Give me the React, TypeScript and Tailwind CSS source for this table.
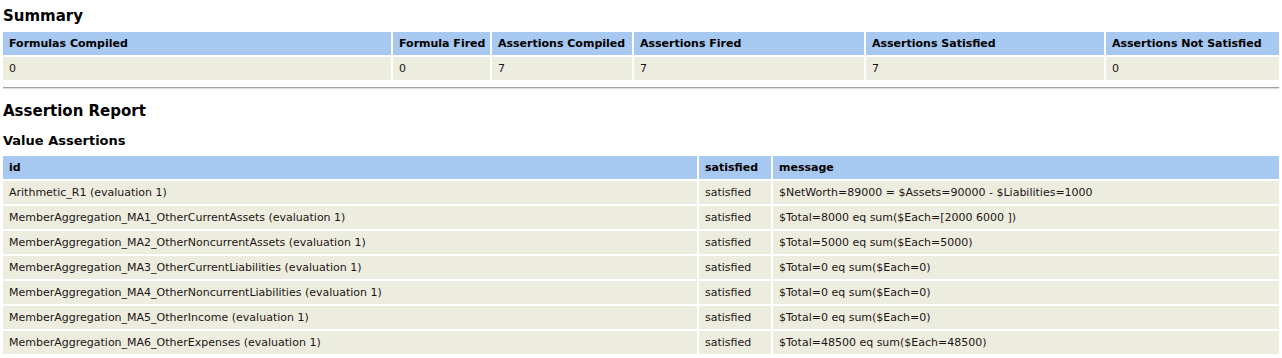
const summaryCols = [
  { label: "Formulas Compiled", value: "0", w: "w-[388px]" },
  { label: "Formula Fired", value: "0", w: "w-[97px]" },
  { label: "Assertions Compiled", value: "7", w: "w-[140px]" },
  { label: "Assertions Fired", value: "7", w: "w-[230px]" },
  { label: "Assertions Satisfied", value: "7", w: "w-[238px]" },
  { label: "Assertions Not Satisfied", value: "0", w: "w-[173px]" },
]

const assertions = [
  { id: "Arithmetic_R1 (evaluation 1)", msg: "$NetWorth=89000 = $Assets=90000 - $Liabilities=1000" },
  { id: "MemberAggregation_MA1_OtherCurrentAssets (evaluation 1)", msg: "$Total=8000 eq sum($Each=[2000 6000 ])" },
  { id: "MemberAggregation_MA2_OtherNoncurrentAssets (evaluation 1)", msg: "$Total=5000 eq sum($Each=5000)" },
  { id: "MemberAggregation_MA3_OtherCurrentLiabilities (evaluation 1)", msg: "$Total=0 eq sum($Each=0)" },
  { id: "MemberAggregation_MA4_OtherNoncurrentLiabilities (evaluation 1)", msg: "$Total=0 eq sum($Each=0)" },
  { id: "MemberAggregation_MA5_OtherIncome (evaluation 1)", msg: "$Total=0 eq sum($Each=0)" },
  { id: "MemberAggregation_MA6_OtherExpenses (evaluation 1)", msg: "$Total=48500 eq sum($Each=48500)" },
]

const th = "h-[23px] bg-[#a7c8f0] pl-[6px] pr-[4px] text-left align-middle font-bold text-black leading-[14px]"
const td = "h-[23px] bg-[#ededdf] pl-[6px] pr-[4px] text-left align-middle leading-[14px]"

export default function App() {
  return (
    <div className="min-h-[358px] bg-white px-px font-['DejaVu_Sans',Verdana,sans-serif] text-[11px] text-[#1c1414]">
      <h2 className="pl-[2px] pt-[7px] text-[15px] font-bold leading-[18px] text-black">Summary</h2>

      <table className="mt-[5px] w-full table-fixed border-separate border-spacing-[2px]">
        <thead>
          <tr>
            {summaryCols.map((c) => (
              <th key={c.label} className={`${th} ${c.w}`}>
                {c.label}
              </th>
            ))}
          </tr>
        </thead>
        <tbody>
          <tr>
            {summaryCols.map((c) => (
              <td key={c.label} className={td}>
                {c.value}
              </td>
            ))}
          </tr>
        </tbody>
      </table>

      <div className="mx-[2px] mt-[5px] h-[2px] border-t border-b border-t-[#a0a0a0] border-b-[#dcdcdc]" />

      <h2 className="mt-[13px] pl-[2px] text-[15px] font-bold leading-[18px] text-black">Assertion Report</h2>
      <h3 className="mt-[13px] pl-[2px] text-[13px] font-bold leading-[16px] text-black">Value Assertions</h3>

      <table className="mt-[5px] w-full table-fixed border-separate border-spacing-[2px]">
        <thead>
          <tr>
            <th className={`${th} w-[694px]`}>id</th>
            <th className={`${th} w-[72px]`}>satisfied</th>
            <th className={`${th} w-[506px]`}>message</th>
          </tr>
        </thead>
        <tbody>
          {assertions.map((a) => (
            <tr key={a.id}>
              <td className={td}>{a.id}</td>
              <td className={td}>satisfied</td>
              <td className={td}>{a.msg}</td>
            </tr>
          ))}
        </tbody>
      </table>
    </div>
  )
}
